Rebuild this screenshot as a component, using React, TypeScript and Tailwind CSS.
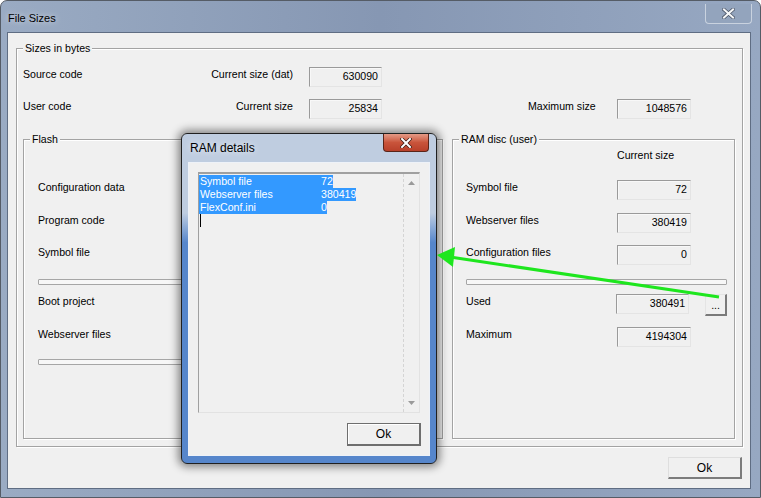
import React from "react";

const font = "font-['Liberation_Sans',Arial,sans-serif]";

function Field({ value, w = "w-[74px]" }: { value: string; w?: string }) {
  return (
    <div
      className={`${w} h-[20px] flex items-center justify-end pr-[3px] bg-[#f0f0f0] border border-t-[#9a9a9a] border-l-[#9a9a9a] border-r-[#e4e4e4] border-b-[#e4e4e4] shadow-[inset_1px_1px_0_#f8f8f8] text-black`}
    >
      {value}
    </div>
  );
}

function Group({
  title,
  className = "",
  children,
}: {
  title: string;
  className?: string;
  children: React.ReactNode;
}) {
  return (
    <div className={`relative border border-[#a3a3a3] shadow-[inset_1px_1px_0_#fff,1px_1px_0_#fff] ${className}`}>
      <span className="absolute -top-[8px] left-[6px] px-[2px] bg-[#f0f0f0] leading-[14px]">{title}</span>
      {children}
    </div>
  );
}

function Bar({ className = "" }: { className?: string }) {
  return <div className={`h-[6px] border border-[#a6a6a6] bg-[#f7f7f7] rounded-[1px] ${className}`} />;
}

function Label({ text, w }: { text: string; w: string }) {
  return <div className={`${w} leading-[14px] whitespace-nowrap`}>{text}</div>;
}

function Line({ label, value }: { label: string; value: string }) {
  return (
    <div className="h-[13px] leading-[13px]">
      <span className="inline-flex bg-[#3399ff] text-white">
        <span className="w-[122px] pl-[1px] whitespace-nowrap">{label}</span>
        <span>{value}</span>
      </span>
    </div>
  );
}

function RamDetails() {
  return (
    <div className="absolute left-[180px] top-[132px] w-[256px] h-[331px] rounded-[6px] border border-[#202020] shadow-[0_0_9px_3px_rgba(0,0,0,0.45)] bg-linear-to-b from-[#bfcde0] from-[24%] to-[#5686cb] to-[33%] flex flex-col">
      <div className="relative h-[28px] flex items-center pl-[8px] text-[12px] text-black [text-shadow:0_0_6px_rgba(255,255,255,0.9)]">
        RAM details
        <div className="absolute right-[7px] top-0 w-[46px] h-[18px] rounded-b-[4px] border border-t-0 border-[#5a2418] bg-linear-to-b from-[#e49a86] via-[#c9543b] to-[#b8402a] flex items-center justify-center">
          <svg width="12" height="10" viewBox="0 0 12 10">
            <path d="M2 1 L10 9 M10 1 L2 9" stroke="#3a1a12" strokeWidth="3.4" strokeLinecap="square" />
            <path d="M2 1 L10 9 M10 1 L2 9" stroke="#fff" strokeWidth="2" strokeLinecap="square" />
          </svg>
        </div>
      </div>
      <div className="mx-[6px] w-[242px] h-[294px] bg-[#f0f0f0] border border-[#eef2f8] flex flex-col">
        <div className="ml-[9px] mt-[9px] w-[222px] h-[241px] flex border-t-2 border-l border-t-[#a0a0a0] border-l-[#a0a0a0] border-r border-b border-r-[#e2e2e2] border-b-[#e2e2e2]">
          <div className="flex-1 pt-[1px]">
            <Line label="Symbol file" value="72" />
            <Line label="Webserver files" value="380419" />
            <Line label="FlexConf.ini" value="0" />
            <div className="ml-[1px] w-[1px] h-[13px] bg-black" />
          </div>
          <div className="w-[16px] border-l border-dashed border-[#d4d4d4] flex flex-col items-center justify-between py-[7px]">
            <svg width="7" height="4" viewBox="0 0 7 4">
              <path d="M0 4 L3.5 0 L7 4 Z" fill="#9a9a9a" />
            </svg>
            <svg width="7" height="4" viewBox="0 0 7 4">
              <path d="M0 0 L3.5 4 L7 0 Z" fill="#9a9a9a" />
            </svg>
          </div>
        </div>
        <div className="mt-[10px] flex justify-end pr-[8px]">
          <div className="w-[74px] h-[23px] flex items-center justify-center border border-[#6e6e6e] border-r-2 border-b-2 bg-[#f0f0f0] shadow-[inset_1px_1px_0_#fff] text-[12px]">
            Ok
          </div>
        </div>
      </div>
    </div>
  );
}

export default function App() {
  return (
    <div
      className={`${font} text-[10.6px] text-black relative w-[761px] h-[498px] overflow-hidden rounded-t-[7px] border border-[#555c66] bg-linear-to-r from-[#9aabc3] via-[#8697b3] to-[#97a8c2] flex flex-col`}
    >
      <div className="h-[31px] flex justify-between">
        <div className="pl-[7px] pt-[10px] leading-[14px] text-[11px] [text-shadow:0_0_6px_rgba(255,255,255,0.8)]">
          File Sizes
        </div>
        <div className="mr-[8px] mt-[3px] w-[47px] h-[20px] rounded-b-[4px] border border-t-0 border-[#c9d2df] bg-[#93a4bd] flex items-center justify-center">
          <svg width="13" height="11" viewBox="0 0 13 11">
            <path d="M2 1.5 L11 9.5 M11 1.5 L2 9.5" stroke="#4a5466" strokeWidth="3.6" strokeLinecap="square" />
            <path d="M2 1.5 L11 9.5 M11 1.5 L2 9.5" stroke="#f4f6f8" strokeWidth="2.1" strokeLinecap="square" />
          </svg>
        </div>
      </div>

      <div className="ml-[6px] w-[744px] h-[457px] bg-[#f0f0f0] border border-[#5f6d83] flex flex-col">
        <Group title="Sizes in bytes" className="ml-[8px] mt-[15px] w-[727px] h-[399px] pl-[6px] pt-[18px]">
          <div className="h-[20px] flex items-start">
            <div className="w-[270px] flex justify-between leading-[14px] whitespace-nowrap">
              <span>Source code</span>
              <span>Current size (dat)</span>
            </div>
            <div className="ml-[16px]">
              <Field value="630090" w="w-[73px]" />
            </div>
          </div>
          <div className="mt-[12px] h-[20px] flex items-start">
            <div className="w-[270px] flex justify-between leading-[14px] whitespace-nowrap">
              <span>User code</span>
              <span>Current size</span>
            </div>
            <div className="ml-[16px]">
              <Field value="25834" w="w-[73px]" />
            </div>
            <div className="ml-[146px]">
              <Label text="Maximum size" w="w-[89px]" />
            </div>
            <Field value="1048576" />
          </div>

          <div className="mt-[20px] flex">
            <Group title="Flash" className="w-[420px] h-[300px] pl-[14px] pt-[40px] pr-[7px]">
              <div className="h-[20px]"><Label text="Configuration data" w="w-[151px]" /></div>
              <div className="mt-[13px] h-[20px]"><Label text="Program code" w="w-[151px]" /></div>
              <div className="mt-[12px] h-[20px]"><Label text="Symbol file" w="w-[151px]" /></div>
              <Bar className="mt-[14px]" />
              <div className="mt-[9px] h-[20px]"><Label text="Boot project" w="w-[151px]" /></div>
              <div className="mt-[13px] h-[20px]"><Label text="Webserver files" w="w-[151px]" /></div>
              <Bar className="mt-[12px]" />
            </Group>

            <Group title="RAM disc (user)" className="ml-[9px] w-[283px] h-[300px] pl-[13px] pt-[8px] pr-[7px]">
              <div className="ml-[151px] leading-[14px]">Current size</div>
              <div className="mt-[18px] h-[20px] flex items-start">
                <Label text="Symbol file" w="w-[151px]" />
                <Field value="72" />
              </div>
              <div className="mt-[13px] h-[20px] flex items-start">
                <Label text="Webserver files" w="w-[151px]" />
                <Field value="380419" />
              </div>
              <div className="mt-[12px] h-[20px] flex items-start">
                <Label text="Configuration files" w="w-[151px]" />
                <Field value="0" />
              </div>
              <Bar className="mt-[14px]" />
              <div className="mt-[9px] h-[20px] flex items-start">
                <Label text="Used" w="w-[151px]" />
                <Field value="380491" />
                <div className="ml-[16px] w-[22px] h-[22px] flex items-end justify-center pb-[5px] border border-t-[#e4e4e4] border-l-[#e4e4e4] border-r-2 border-b-2 border-r-[#7a7a7a] border-b-[#7a7a7a] leading-[8px]">
                  ...
                </div>
              </div>
              <div className="mt-[13px] h-[20px] flex items-start">
                <Label text="Maximum" w="w-[151px]" />
                <Field value="4194304" />
              </div>
            </Group>
          </div>
        </Group>

        <div className="ml-[8px] mt-[10px] w-[727px] flex justify-end">
          <div className="mr-[1px] w-[74px] h-[22px] flex items-center justify-center border border-t-[#dedede] border-l-[#dedede] border-r-2 border-b-2 border-r-[#7c7c7c] border-b-[#7c7c7c] text-[12px]">
            Ok
          </div>
        </div>
      </div>

      <RamDetails />

      <svg className="absolute inset-0 pointer-events-none" width="761" height="498" viewBox="1 1 761 498">
        <line x1="719" y1="297" x2="450" y2="257" stroke="#1ee61e" strokeWidth="3" />
        <polygon points="437,255 455,247 453,267" fill="#1ee61e" />
      </svg>
    </div>
  );
}
